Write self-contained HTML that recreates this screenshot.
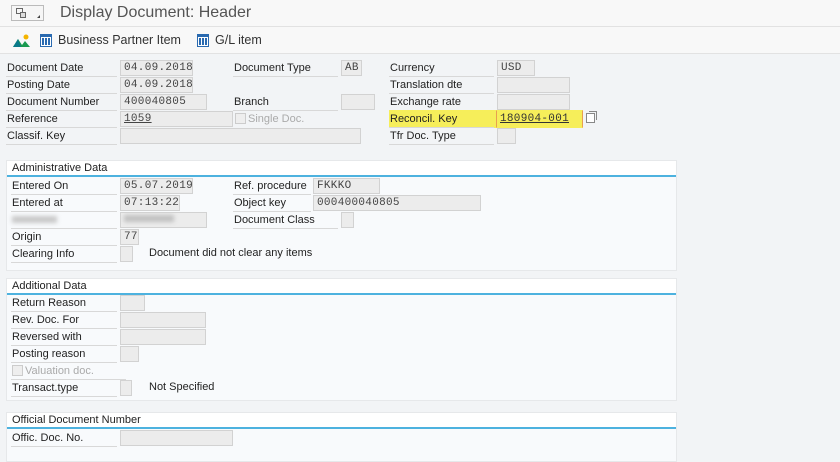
<!DOCTYPE html>
<html><head><meta charset="utf-8"><style>
*{box-sizing:border-box;margin:0;padding:0}
body{width:840px;height:455px;overflow:hidden;background:#f2f4f6;font-family:"Liberation Sans",sans-serif;font-size:11px;color:#222;position:relative}
.a{position:absolute}
.l{position:absolute;height:17px;line-height:17px;border-bottom:1px solid #d8d8d8;padding-left:1px;white-space:nowrap}
.f{position:absolute;height:16px;background:#ececec;border:1px solid #d2d2d2;font-family:"Liberation Mono",monospace;font-size:11px;line-height:14px;padding-left:3px;letter-spacing:0.3px;color:#444;white-space:nowrap;overflow:hidden}
.g{position:absolute;left:6px;width:671px;background:#f8fafc;border:1px solid #e6e8ea}
.gt{height:16px;background:#fff;border-bottom:2px solid #4db2df;padding-left:5px;line-height:15px}
.cb{display:inline-block;width:11px;height:11px;border:1px solid #ccc;background:#eee;vertical-align:-2px;margin-right:2px}
</style></head><body>
<div class="a" style="left:0;top:0;width:840px;height:27px;background:#f8f8f8;border-bottom:1px solid #e2e2e2"></div>
<div class="a" style="left:0;top:27px;width:840px;height:27px;background:#f8f8f8;border-bottom:1px solid #e2e2e2"></div>
<div class="a" style="left:11px;top:5px;width:33px;height:16px;border:1px solid #bbb;background:#f6f6f6"></div>
<div class="a" style="left:16px;top:8px;width:7px;height:6px;border:1px solid #666"></div>
<div class="a" style="left:20px;top:12px;width:6px;height:6px;border:1px solid #666;background:#ddd"></div>
<div class="a" style="left:37px;top:15px;width:0;height:0;border-left:3px solid transparent;border-bottom:3px solid #444"></div>
<div class="a" style="left:60px;top:4px;font-size:16px;color:#555">Display Document: Header</div>
<svg class="a" style="left:13px;top:34px" width="18" height="14"><polygon points="0,13 5,5 9,11 12,7 17,13" fill="#1a9a50"/><polygon points="0,13 5,5 8,13" fill="#0b7a8a"/><circle cx="13" cy="3" r="2.5" fill="#f4b400"/></svg>
<svg class="a" style="left:40px;top:34px" width="12" height="13"><rect x="0.5" y="0.5" width="11" height="12" fill="#fff" stroke="#2a6ab0"/><rect x="2" y="4" width="2" height="7" fill="#2a6ab0"/><rect x="5" y="4" width="2" height="7" fill="#2a6ab0"/><rect x="8" y="4" width="2" height="7" fill="#2a6ab0"/><rect x="1" y="1" width="10" height="2" fill="#2a6ab0"/></svg>
<div class="a" style="left:58px;top:33px;font-size:12.5px;color:#333">Business Partner Item</div>
<svg class="a" style="left:197px;top:34px" width="12" height="13"><rect x="0.5" y="0.5" width="11" height="12" fill="#fff" stroke="#2a6ab0"/><rect x="2" y="4" width="2" height="7" fill="#2a6ab0"/><rect x="5" y="4" width="2" height="7" fill="#2a6ab0"/><rect x="8" y="4" width="2" height="7" fill="#2a6ab0"/><rect x="1" y="1" width="10" height="2" fill="#2a6ab0"/></svg>
<div class="a" style="left:215px;top:33px;font-size:12.5px;color:#333">G/L item</div>

<div class="l" style="left:6px;top:60px;width:111px">Document Date</div><div class="f" style="left:120px;top:60px;width:73px">04.09.2018</div>
<div class="l" style="left:6px;top:77px;width:111px">Posting Date</div><div class="f" style="left:120px;top:77px;width:73px">04.09.2018</div>
<div class="l" style="left:6px;top:94px;width:111px">Document Number</div><div class="f" style="left:120px;top:94px;width:87px">400040805</div>
<div class="l" style="left:6px;top:111px;width:111px">Reference</div><div class="f" style="left:120px;top:111px;width:113px"><u>1059</u></div>
<div class="l" style="left:6px;top:128px;width:111px">Classif. Key</div><div class="f" style="left:120px;top:128px;width:241px"></div>
<div class="l" style="left:233px;top:60px;width:105px">Document Type</div><div class="f" style="left:341px;top:60px;width:21px">AB</div>
<div class="l" style="left:233px;top:94px;width:105px">Branch</div><div class="f" style="left:341px;top:94px;width:34px"></div>
<div class="a" style="left:235px;top:112px;color:#aaa;line-height:14px"><span class="cb"></span>Single Doc.</div>
<div class="l" style="left:389px;top:60px;width:105px">Currency</div><div class="f" style="left:497px;top:60px;width:38px">USD</div>
<div class="l" style="left:389px;top:77px;width:105px">Translation dte</div><div class="f" style="left:497px;top:77px;width:73px"></div>
<div class="l" style="left:389px;top:94px;width:105px">Exchange rate</div><div class="f" style="left:497px;top:94px;width:73px"></div>
<div class="a" style="left:389px;top:110px;width:194px;height:18px;background:#f6ee5a"></div>
<div class="l" style="left:389px;top:111px;width:105px">Reconcil. Key</div>
<div class="f" style="left:496px;top:110px;width:87px;height:18px;background:#f6ee5a;border:1px solid #e8a050;border-top-color:#f6ee5a;border-bottom-color:#f6ee5a;color:#333;line-height:16px"><u>180904-001</u></div>
<div class="a" style="left:586px;top:113px;width:9px;height:10px;border:1px solid #888;background:#fff"></div><div class="a" style="left:589px;top:111px;width:8px;height:9px;border:1px solid #888;border-left:none;border-bottom:none"></div>
<div class="l" style="left:389px;top:128px;width:105px">Tfr Doc. Type</div><div class="f" style="left:497px;top:128px;width:19px"></div>

<div class="g" style="top:160px;height:111px"><div class="gt">Administrative Data</div></div>
<div class="l" style="left:11px;top:178px;width:106px">Entered On</div><div class="f" style="left:120px;top:178px;width:73px">05.07.2019</div>
<div class="l" style="left:11px;top:195px;width:106px">Entered at</div><div class="f" style="left:120px;top:195px;width:60px">07:13:22</div>
<div class="l" style="left:11px;top:212px;width:106px"><span style="display:inline-block;width:45px;height:7px;background:#c8c8c8;filter:blur(2px)"></span></div><div class="f" style="left:120px;top:212px;width:87px"><span style="display:inline-block;width:50px;height:7px;background:#c0c0c0;filter:blur(2px)"></span></div>
<div class="l" style="left:11px;top:229px;width:106px">Origin</div><div class="f" style="left:120px;top:229px;width:19px">77</div>
<div class="l" style="left:11px;top:246px;width:106px">Clearing Info</div><div class="f" style="left:120px;top:246px;width:13px"></div>
<div class="a" style="left:149px;top:247px">Document did not clear any items</div>
<div class="l" style="left:233px;top:178px;width:78px">Ref. procedure</div><div class="f" style="left:313px;top:178px;width:67px">FKKKO</div>
<div class="l" style="left:233px;top:195px;width:78px">Object key</div><div class="f" style="left:313px;top:195px;width:168px">000400040805</div>
<div class="l" style="left:233px;top:212px;width:105px">Document Class</div><div class="f" style="left:341px;top:212px;width:13px"></div>

<div class="g" style="top:278px;height:123px"><div class="gt">Additional Data</div></div>
<div class="l" style="left:11px;top:295px;width:106px">Return Reason</div><div class="f" style="left:120px;top:295px;width:25px"></div>
<div class="l" style="left:11px;top:312px;width:106px">Rev. Doc. For</div><div class="f" style="left:120px;top:312px;width:86px"></div>
<div class="l" style="left:11px;top:329px;width:106px">Reversed with</div><div class="f" style="left:120px;top:329px;width:86px"></div>
<div class="l" style="left:11px;top:346px;width:106px">Posting reason</div><div class="f" style="left:120px;top:346px;width:19px"></div>
<div class="l" style="left:11px;top:363px;width:115px;color:#aaa"><span class="cb"></span>Valuation doc.</div>
<div class="l" style="left:11px;top:380px;width:106px">Transact.type</div><div class="f" style="left:120px;top:380px;width:12px"></div>
<div class="a" style="left:149px;top:381px">Not Specified</div>

<div class="g" style="top:412px;height:50px"><div class="gt">Official Document Number</div></div>
<div class="l" style="left:11px;top:430px;width:106px">Offic. Doc. No.</div><div class="f" style="left:120px;top:430px;width:113px"></div>
</body></html>
